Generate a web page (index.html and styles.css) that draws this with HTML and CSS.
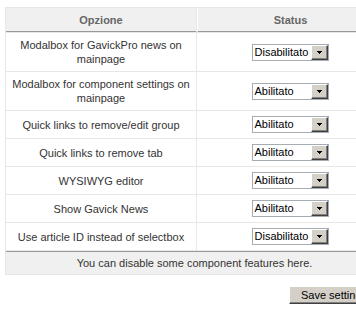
FILE: index.html
```html
<!DOCTYPE html>
<html lang="it">
<head>
    <meta charset="UTF-8">
    <title>Component settings</title>
    <link rel="stylesheet" href="styles.css">
</head>
<body>
    <table class="adminlist">
        <thead>
            <tr>
                <th class="col-option">Opzione</th>
                <th class="col-status">Status</th>
            </tr>
        </thead>
        <tbody>
            <tr>
                <td>Modalbox for GavickPro news on mainpage</td>
                <td><div class="select"><span class="select-value">Disabilitato</span><span class="select-arrow"><svg width="5" height="3" viewBox="0 0 5 3"><path d="M0 0h5v1h-1v1h-1v1h-1v-1h-1v-1h-1z"/></svg></span></div></td>
            </tr>
            <tr>
                <td>Modalbox for component settings on mainpage</td>
                <td><div class="select"><span class="select-value">Abilitato</span><span class="select-arrow"><svg width="5" height="3" viewBox="0 0 5 3"><path d="M0 0h5v1h-1v1h-1v1h-1v-1h-1v-1h-1z"/></svg></span></div></td>
            </tr>
            <tr>
                <td>Quick links to remove/edit group</td>
                <td><div class="select"><span class="select-value">Abilitato</span><span class="select-arrow"><svg width="5" height="3" viewBox="0 0 5 3"><path d="M0 0h5v1h-1v1h-1v1h-1v-1h-1v-1h-1z"/></svg></span></div></td>
            </tr>
            <tr>
                <td>Quick links to remove tab</td>
                <td><div class="select"><span class="select-value">Abilitato</span><span class="select-arrow"><svg width="5" height="3" viewBox="0 0 5 3"><path d="M0 0h5v1h-1v1h-1v1h-1v-1h-1v-1h-1z"/></svg></span></div></td>
            </tr>
            <tr>
                <td>WYSIWYG editor</td>
                <td><div class="select"><span class="select-value">Abilitato</span><span class="select-arrow"><svg width="5" height="3" viewBox="0 0 5 3"><path d="M0 0h5v1h-1v1h-1v1h-1v-1h-1v-1h-1z"/></svg></span></div></td>
            </tr>
            <tr>
                <td>Show Gavick News</td>
                <td><div class="select"><span class="select-value">Abilitato</span><span class="select-arrow"><svg width="5" height="3" viewBox="0 0 5 3"><path d="M0 0h5v1h-1v1h-1v1h-1v-1h-1v-1h-1z"/></svg></span></div></td>
            </tr>
            <tr>
                <td>Use article ID instead of selectbox</td>
                <td><div class="select"><span class="select-value">Disabilitato</span><span class="select-arrow"><svg width="5" height="3" viewBox="0 0 5 3"><path d="M0 0h5v1h-1v1h-1v1h-1v-1h-1v-1h-1z"/></svg></span></div></td>
            </tr>
        </tbody>
        <tfoot>
            <tr>
                <td colspan="2">You can disable some component features here.</td>
            </tr>
        </tfoot>
    </table>

    <div class="actions">
        <button class="save-btn" type="button">Save settings</button>
    </div>
</body>
</html>
```

FILE: styles.css
```css
html {
    overflow: hidden;
}

body {
    margin: 0;
    padding: 7px 0 0 5px;
    background: #fff;
    color: #333;
    font-family: "Liberation Sans", Arial, sans-serif;
    font-size: 11px;
}

.adminlist {
    width: 379px;
    table-layout: fixed;
    border-collapse: separate;
    border-spacing: 1px;
    background: #e7e7e7;
}

.adminlist th,
.adminlist td {
    box-sizing: border-box;
    padding: 4px;
    text-align: center;
    line-height: 14px;
}

.adminlist .col-option {
    width: 190px;
}

.adminlist .col-status {
    width: 186px;
    border-left: 1px solid #fff;
}

.adminlist thead th {
    height: 24px;
    background: #f0f0f0;
    color: #666;
    font-weight: bold;
    border-bottom: 1px solid #999;
}

.adminlist tbody td {
    height: 27px;
    padding: 5px 4px;
    background: #fff;
}

.adminlist tfoot td {
    height: 23px;
    background: #f0f0f0;
    border-top: 1px solid #999;
    color: #333;
}

.select {
    display: inline-flex;
    box-sizing: border-box;
    width: 77px;
    height: 17px;
    border: 1px solid #a5acb2;
    background: #fff;
    vertical-align: middle;
    text-align: left;
}

.select-value {
    flex: 1;
    padding-left: 2px;
    line-height: 15px;
    color: #000;
}

.select-arrow {
    display: flex;
    align-items: center;
    justify-content: center;
    box-sizing: border-box;
    width: 17px;
    height: 15px;
    background: #d4d0c8;
    border: 1px solid;
    border-color: #fff #404040 #404040 #fff;
    box-shadow: inset -1px -1px #808080;
}

.actions {
    width: 379px;
    margin-top: 11px;
    text-align: right;
}

.save-btn {
    width: 90px;
    height: 18px;
    margin-right: 5px;
    padding: 0;
    background: #d4d0c8;
    border: 1px solid;
    border-color: #fff #404040 #404040 #fff;
    box-shadow: inset -1px -1px #808080;
    color: #000;
    font-family: "Liberation Sans", Arial, sans-serif;
    font-size: 11px;
}
```
